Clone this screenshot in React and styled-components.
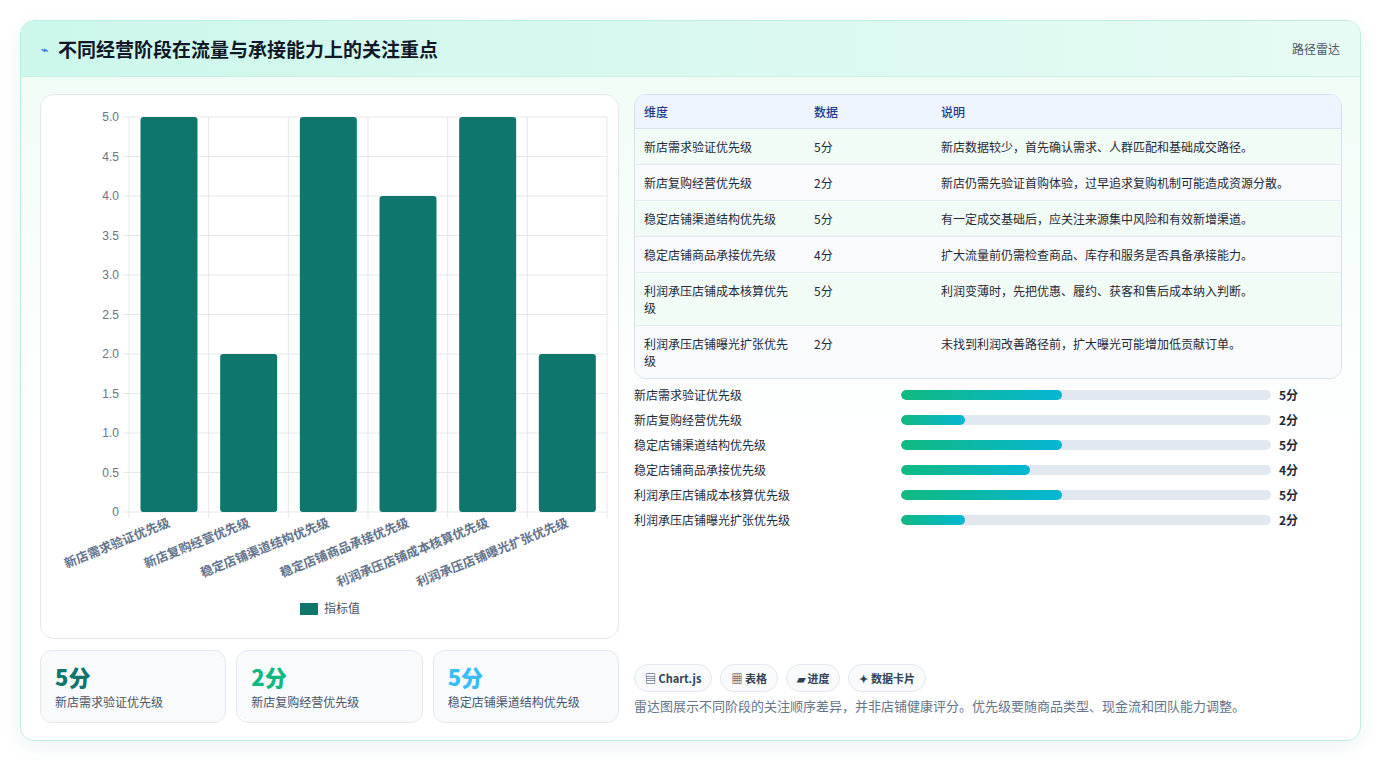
import React from "react";
import styled, { createGlobalStyle } from "styled-components";

const Global = createGlobalStyle`
  body { margin: 0; background: #fff; font-family: "Noto Sans CJK SC", "Noto Sans", sans-serif; }
`;

const rows = [
  { name: "新店需求验证优先级", v: 5, note: "新店数据较少，首先确认需求、人群匹配和基础成交路径。" },
  { name: "新店复购经营优先级", v: 2, note: "新店仍需先验证首购体验，过早追求复购机制可能造成资源分散。" },
  { name: "稳定店铺渠道结构优先级", v: 5, note: "有一定成交基础后，应关注来源集中风险和有效新增渠道。" },
  { name: "稳定店铺商品承接优先级", v: 4, note: "扩大流量前仍需检查商品、库存和服务是否具备承接能力。" },
  { name: "利润承压店铺成本核算优先级", v: 5, note: "利润变薄时，先把优惠、履约、获客和售后成本纳入判断。" },
  { name: "利润承压店铺曝光扩张优先级", v: 2, note: "未找到利润改善路径前，扩大曝光可能增加低贡献订单。" },
];

const Page = styled.div`
  padding: 20px 20px 20px 20px;
`;
const Card = styled.div`
  border: 1px solid #bdeee0;
  border-radius: 14px;
  background: linear-gradient(180deg, #effcf6 0%, #ffffff 60%);
  box-shadow: 0 6px 18px rgba(15, 118, 110, 0.08);
  overflow: hidden;
`;
const Header = styled.div`
  height: 55px;
  display: flex;
  align-items: center;
  justify-content: space-between;
  padding: 0 20px;
  background: linear-gradient(90deg, #cdf7ec 0%, #e6fbf4 100%);
  border-bottom: 1px solid #c9efe3;
`;
const Title = styled.h1`
  margin: 0;
  font-size: 19px;
  font-weight: 700;
  color: #111827;
  display: flex;
  align-items: center;
  gap: 10px;
`;
const Tag = styled.span`
  font-size: 12px;
  color: #4b5563;
`;
const Body = styled.div`
  display: grid;
  grid-template-columns: 579px 1fr;
  gap: 15px;
  padding: 17px 18px 17px 19px;
`;
const Col = styled.div`
  display: flex;
  flex-direction: column;
  gap: 11px;
`;
const ChartBox = styled.div`
  height: 543px;
  border: 1px solid #e2e8f0;
  border-radius: 14px;
  background: #fff;
`;
const Stats = styled.div`
  display: grid;
  grid-template-columns: repeat(3, 1fr);
  gap: 10px;
`;
const Stat = styled.div`
  height: 73px;
  box-sizing: border-box;
  border: 1px solid #e2e8f0;
  border-radius: 12px;
  background: #f8fafc;
  padding: 10px 14px;
`;
const StatNum = styled.div`
  font-size: 22px;
  font-weight: 800;
  color: ${(p) => p.$c};
  line-height: 30px;
`;
const StatLabel = styled.div`
  font-size: 12px;
  color: #475569;
  margin-top: 2px;
`;
const Table = styled.table`
  width: 100%;
  border-collapse: separate;
  border-spacing: 0;
  border: 1px solid #d7e0ee;
  border-radius: 12px;
  overflow: hidden;
  font-size: 12px;
  color: #1f2937;
`;
const Th = styled.th`
  text-align: left;
  font-weight: 500;
  color: #1e3a8a;
  background: #eef5ff;
  height: 33px;
  padding: 0 9px;
  border-bottom: 1px solid #d7e0ee;
`;
const Tr = styled.tr`
  background: ${(p) => (p.$odd ? "#f8fafc" : "#f2fcf7")};
`;
const Td = styled.td`
  padding: 9px 9px;
  line-height: 17px;
  vertical-align: top;
  border-top: ${(p) => (p.$first ? "none" : "1px solid #e5e9f0")};
`;
const Bars = styled.div`
  display: flex;
  flex-direction: column;
  gap: 8px;
  margin-top: 7px;
`;
const BarRow = styled.div`
  display: grid;
  grid-template-columns: 267px 370px 1fr;
  align-items: center;
  font-size: 12px;
  color: #1f2937;
  height: 17px;
`;
const Track = styled.div`
  height: 10px;
  border-radius: 5px;
  background: #e2e8f0;
  overflow: hidden;
`;
const Fill = styled.div`
  height: 100%;
  border-radius: 5px;
  background: linear-gradient(90deg, #10b981, #06b6d4);
`;
const Val = styled.span`
  padding-left: 8px;
  font-weight: 700;
`;
const Spacer = styled.div`
  flex: 1;
`;
const Chips = styled.div`
  display: flex;
  gap: 8px;
`;
const Chip = styled.span`
  border: 1px solid #e2e8f0;
  background: #f8fafc;
  border-radius: 14px;
  padding: 5px 10px;
  font-size: 11px;
  font-weight: 600;
  color: #334155;
`;
const Note = styled.p`
  margin: 4px 0 8px;
  font-size: 13px;
  color: #64748b;
`;

function Chart() {
  const x0 = 88, x1 = 566, y0 = 22, y1 = 417;
  const w = (x1 - x0) / 6;
  const ticks = [0, 0.5, 1, 1.5, 2, 2.5, 3, 3.5, 4, 4.5, 5];
  const y = (v) => y1 - (v / 5) * (y1 - y0);
  return (
    <svg width="578" height="541" style={{ display: "block" }}>
      {ticks.map((t) => (
        <g key={t}>
          <line x1={x0 - 6} x2={x1} y1={y(t)} y2={y(t)} stroke="#e5e7eb" />
          <text x={x0 - 10} y={y(t) + 4} fontSize="12" fill="#6b7280" textAnchor="end" fontFamily="Liberation Sans, sans-serif">
            {t === 0 ? "0" : t.toFixed(1)}
          </text>
        </g>
      ))}
      {[0, 1, 2, 3, 4, 5, 6].map((i) => (
        <line key={i} x1={x0 + i * w} x2={x0 + i * w} y1={y0} y2={y1 + 6} stroke="#e5e7eb" />
      ))}
      {rows.map((r, i) => (
        <g key={r.name}>
          <rect x={x0 + i * w + 11.5} y={y(r.v)} width={57} height={y1 - y(r.v)} rx="3" fill="#0f766e" />
          <text
            transform={`translate(${x0 + i * w + w / 2 + 2},${y1 + 14}) rotate(-22)`}
            fontSize="12.5" fontWeight="600" fill="#64748b" textAnchor="end"
          >
            {r.name}
          </text>
        </g>
      ))}
      <rect x="259" y="508" width="18" height="12" fill="#0f766e" />
      <text x="283" y="518" fontSize="12" fill="#475569">指标值</text>
    </svg>
  );
}

export default function App() {
  return (
    <>
      <Global />
      <Page>
        <Card>
          <Header>
            <Title>
              <span style={{ color: "#3b82f6", fontSize: 12 }}>⌁</span>
              不同经营阶段在流量与承接能力上的关注重点
            </Title>
            <Tag>路径雷达</Tag>
          </Header>
          <Body>
            <Col>
              <ChartBox>
                <Chart />
              </ChartBox>
              <Stats>
                <Stat><StatNum $c="#0f766e">5分</StatNum><StatLabel>新店需求验证优先级</StatLabel></Stat>
                <Stat><StatNum $c="#10b981">2分</StatNum><StatLabel>新店复购经营优先级</StatLabel></Stat>
                <Stat><StatNum $c="#38bdf8">5分</StatNum><StatLabel>稳定店铺渠道结构优先级</StatLabel></Stat>
              </Stats>
            </Col>
            <Col style={{ gap: 0 }}>
              <Table>
                <colgroup>
                  <col style={{ width: 170 }} />
                  <col style={{ width: 127 }} />
                  <col />
                </colgroup>
                <thead>
                  <tr><Th>维度</Th><Th>数据</Th><Th>说明</Th></tr>
                </thead>
                <tbody>
                  {rows.map((r, i) => (
                    <Tr key={r.name} $odd={i % 2 === 1}>
                      <Td $first={i === 0}>{r.name}</Td>
                      <Td $first={i === 0}>{r.v}分</Td>
                      <Td $first={i === 0}>{r.note}</Td>
                    </Tr>
                  ))}
                </tbody>
              </Table>
              <Bars>
                {rows.map((r) => (
                  <BarRow key={r.name}>
                    <span>{r.name}</span>
                    <Track><Fill style={{ width: `${(r.v / 5) * 43.5}%` }} /></Track>
                    <Val>{r.v}分</Val>
                  </BarRow>
                ))}
              </Bars>
              <Spacer />
              <Chips>
                <Chip>▤ Chart.js</Chip>
                <Chip>▦ 表格</Chip>
                <Chip>▰ 进度</Chip>
                <Chip>✦ 数据卡片</Chip>
              </Chips>
              <Note>雷达图展示不同阶段的关注顺序差异，并非店铺健康评分。优先级要随商品类型、现金流和团队能力调整。</Note>
            </Col>
          </Body>
        </Card>
      </Page>
    </>
  );
}
